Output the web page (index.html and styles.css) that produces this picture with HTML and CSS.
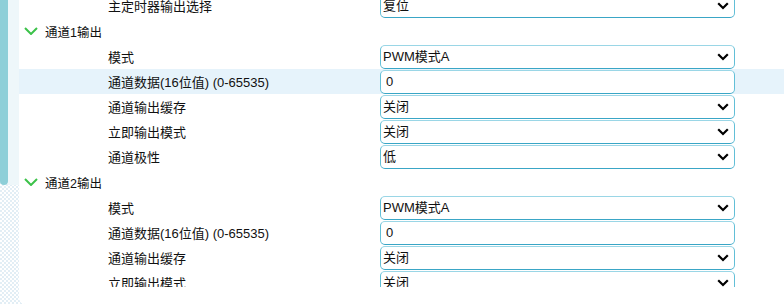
FILE: index.html
```html
<!DOCTYPE html>
<html lang="zh">
<head>
<meta charset="utf-8">
<link rel="stylesheet" href="styles.css">
</head>
<body>
<div class="rail">
  <div class="track"><div class="thumb"></div><div class="gutter"></div></div>
</div>
<div class="panel">
  <div class="scroll">
    <div class="list">
      <div class="row"><span class="label">主定时器输出选择</span><select class="field"><option>复位</option></select></div>
      <div class="group"><svg class="chev" viewBox="0 0 14 8" width="14" height="8"><path d="M1 1 L7 7 L13 1" fill="none" stroke="#3cc24a" stroke-width="2"/></svg><span>通道1输出</span></div>
      <div class="row"><span class="label">模式</span><select class="field"><option>PWM模式A</option></select></div>
      <div class="row hl"><span class="label">通道数据(16位值) (0-65535)</span><input class="field input" value="0"></div>
      <div class="row"><span class="label">通道输出缓存</span><select class="field"><option>关闭</option></select></div>
      <div class="row"><span class="label">立即输出模式</span><select class="field"><option>关闭</option></select></div>
      <div class="row"><span class="label">通道极性</span><select class="field"><option>低</option></select></div>
      <div class="group"><svg class="chev" viewBox="0 0 14 8" width="14" height="8"><path d="M1 1 L7 7 L13 1" fill="none" stroke="#3cc24a" stroke-width="2"/></svg><span>通道2输出</span></div>
      <div class="row"><span class="label">模式</span><select class="field"><option>PWM模式A</option></select></div>
      <div class="row"><span class="label">通道数据(16位值) (0-65535)</span><input class="field input" value="0"></div>
      <div class="row"><span class="label">通道输出缓存</span><select class="field"><option>关闭</option></select></div>
      <div class="row"><span class="label">立即输出模式</span><select class="field"><option>关闭</option></select></div>
    </div>
  </div>
</div>
</body>
</html>
```
FILE: styles.css
```css
html, body {
  margin: 0;
  padding: 0;
  height: 304px;
  overflow: hidden;
  background: repeating-conic-gradient(#e2eef5 0 25%, #ffffff 0 50%) 0 0 / 4px 4px;
}
body {
  display: flex;
  font-family: "Liberation Sans", "Noto Sans CJK SC", sans-serif;
  font-size: 13px;
  color: #111;
}
.rail {
  width: 19px;
  flex: none;
}
.track {
  display: flex;
  height: 185px;
}
.thumb {
  width: 8px;
  background: #8ecfd8;
  border-radius: 0 0 4px 4px;
}
.gutter {
  flex: 1;
  background: #eef7fa;
}
.panel {
  flex: 1;
  height: 304px;
  background: #fff;
  border-bottom-left-radius: 6px;
  overflow: hidden;
}
.scroll {
  height: 287px;
  overflow: hidden;
}
.list {
  margin-top: -7px;
}
.row {
  display: grid;
  grid-template-columns: 272px 355px;
  align-items: center;
  height: 25px;
  padding-left: 89px;
}
.row.hl {
  background: #e6f3fb;
}
.label {
  white-space: nowrap;
}
.group {
  display: flex;
  align-items: center;
  gap: 7px;
  height: 26px;
  padding-left: 5px;
  font-size: 12.5px;
}
.field {
  box-sizing: border-box;
  height: 24px;
  width: 355px;
  margin: 0;
  border: 1px solid;
  border-color: #9ad6e6 #62bfd7 #3aa6c6 #62bfd7;
  border-radius: 5px;
  background: #fff;
  font-family: "Liberation Sans", "Noto Sans CJK SC", sans-serif;
  font-size: 13px;
  color: #111;
  padding: 0 2px;
  outline: none;
}
select.field {
  appearance: none;
  -webkit-appearance: none;
  background: #fff url("data:image/svg+xml;utf8,<svg xmlns='http://www.w3.org/2000/svg' width='12' height='8' viewBox='0 0 12 8'><path d='M1.2 1.2 L6 6 L10.8 1.2' fill='none' stroke='black' stroke-width='2.2'/></svg>") no-repeat right 5px center / 12px 8px;
}
.input {
  padding-left: 5px;
}
```
